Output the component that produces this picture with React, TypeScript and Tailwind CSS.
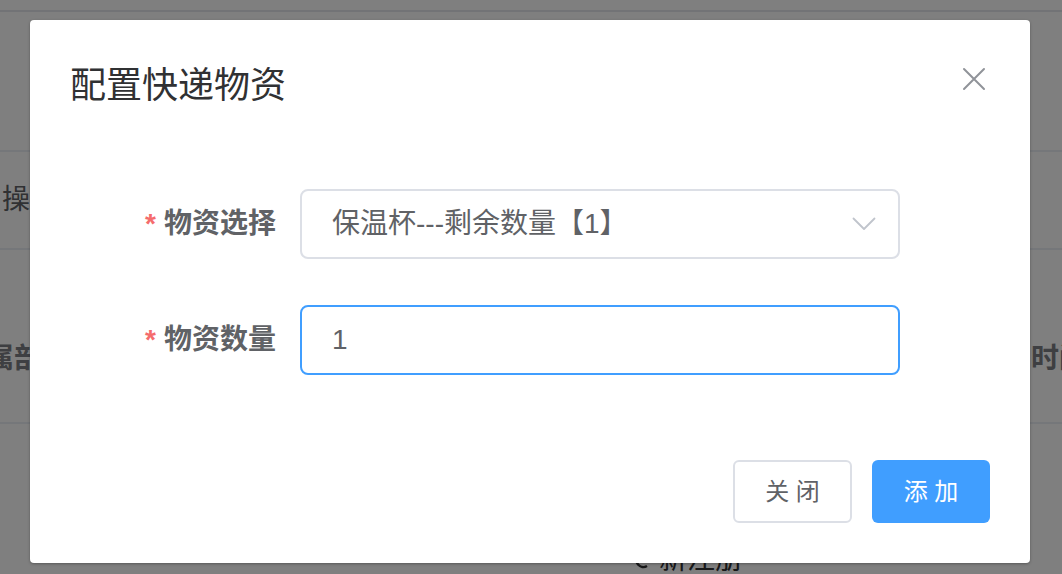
import React from "react";

const font = {
  fontFamily: '"Liberation Sans", "Noto Sans CJK SC", sans-serif',
};

function CloseIcon() {
  return (
    <svg width="24" height="24" viewBox="0 0 24 24" fill="none">
      <path d="M2 2 L22 22 M22 2 L2 22" stroke="#909399" strokeWidth="2" strokeLinecap="round" />
    </svg>
  );
}

function ChevronDown() {
  return (
    <svg width="24" height="14" viewBox="0 0 24 14" fill="none">
      <path d="M1.5 1.5 L12 12 L22.5 1.5" stroke="#c0c4cc" strokeWidth="1.8" strokeLinecap="round" strokeLinejoin="round" />
    </svg>
  );
}

function FormItem({ label, children }: { label: string; children: React.ReactNode }) {
  return (
    <div className="flex items-center">
      <label className="w-[230px] pr-[24px] text-right text-[28px] font-semibold leading-[70px] text-[#606266] whitespace-nowrap">
        <span className="mr-[8px] text-[#f56c6c]">*</span>
        {label}
      </label>
      {children}
    </div>
  );
}

export default function App() {
  return (
    <div className="relative h-[574px] w-[1062px] overflow-hidden bg-white" style={font}>
      {/* page behind the dialog */}
      <div className="text-[28px] leading-[28px] text-[#606266]">
        <div className="h-[10px]" />
        <div className="h-[2px] bg-[#e4e7ed]" />
        <div className="h-[140px] border-b-2 border-[#ebeef5]" />
        <div className="flex h-[98px] items-center border-b-2 border-[#ebeef5] pl-[2px]">
          <span className="whitespace-nowrap">操作</span>
        </div>
        <div className="flex h-[174px] items-start border-b-2 border-[#ebeef5] pt-[95px] font-bold text-[#7d7f84]">
          <span className="ml-[-14px] w-[1045px] shrink-0 whitespace-nowrap">属部门</span>
          <span className="shrink-0 whitespace-nowrap">时间</span>
        </div>
        <div className="flex items-center pl-[633px] pt-[122px] text-[#303133]">
          <svg width="16" height="24" viewBox="0 0 16 24" fill="none" className="mr-[10px]">
            <path d="M14 6 A7 7 0 1 0 14 18" stroke="#303133" strokeWidth="2.5" />
          </svg>
          <span className="whitespace-nowrap">新注册</span>
        </div>
      </div>

      {/* mask */}
      <div className="absolute inset-0 bg-black/50" />

      {/* dialog */}
      <div className="absolute left-[30px] top-[20px] flex h-[543px] w-[1000px] flex-col rounded-[4px] bg-white shadow-[0_1px_3px_rgba(0,0,0,0.3)]">
        <div className="relative px-[40px] pb-[20px] pt-[42px]">
          <h2 className="text-[36px] leading-[48px] text-[#303133]">配置快递物资</h2>
          <button className="absolute right-[40px] top-[43px] flex h-[32px] w-[32px] items-center justify-center">
            <CloseIcon />
          </button>
        </div>

        <div className="px-[40px] pt-[59px]">
          <FormItem label="物资选择">
            <div className="flex h-[70px] w-[600px] items-center justify-between rounded-[8px] border-2 border-[#dcdfe6] pl-[30px] pr-[22px]">
              <span className="text-[28px] text-[#606266]">保温杯---剩余数量【1】</span>
              <ChevronDown />
            </div>
          </FormItem>
          <div className="h-[46px]" />
          <FormItem label="物资数量">
            <div className="flex h-[70px] w-[600px] items-center rounded-[8px] border-2 border-[#409eff] pl-[30px]">
              <span className="text-[28px] text-[#606266]">1</span>
            </div>
          </FormItem>
        </div>

        <div className="mt-auto flex justify-end gap-[20px] px-[40px] pb-[40px]">
          <button className="h-[63px] w-[119px] rounded-[6px] border-2 border-[#dcdfe6] bg-white text-[24px] text-[#606266]">
            关 闭
          </button>
          <button className="h-[63px] w-[118px] rounded-[6px] bg-[#409eff] text-[24px] text-white">
            添 加
          </button>
        </div>
      </div>
    </div>
  );
}
